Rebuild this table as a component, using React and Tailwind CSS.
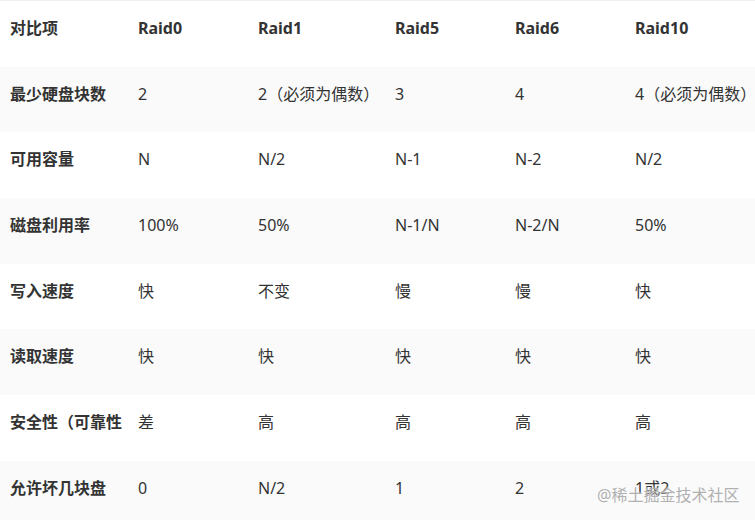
import React from "react";

const header = ["对比项", "Raid0", "Raid1", "Raid5", "Raid6", "Raid10"];
const rows = [
  ["最少硬盘块数", "2", "2（必须为偶数）", "3", "4", "4（必须为偶数）"],
  ["可用容量", "N", "N/2", "N-1", "N-2", "N/2"],
  ["磁盘利用率", "100%", "50%", "N-1/N", "N-2/N", "50%"],
  ["写入速度", "快", "不变", "慢", "慢", "快"],
  ["读取速度", "快", "快", "快", "快", "快"],
  ["安全性（可靠性", "差", "高", "高", "高", "高"],
  ["允许坏几块盘", "0", "N/2", "1", "2", "1或2"],
];

const font = { fontFamily: '"Noto Sans", "Noto Sans CJK SC", sans-serif' };

function Row({ cells, head, shaded }) {
  return (
    <div
      className={`grid grid-cols-[128px_120px_137px_120px_120px_1fr] h-[65.7px] ${
        shaded ? "bg-[#fafafa]" : "bg-white"
      }`}
    >
      {cells.map((c, i) => (
        <div
          key={i}
          className={`pl-[10px] pt-[15px] text-[16px] leading-6 whitespace-nowrap overflow-hidden text-[#333] ${
            head || i === 0 ? "font-bold" : "font-normal"
          }`}
        >
          {c}
        </div>
      ))}
    </div>
  );
}

export default function App() {
  return (
    <div className="relative w-[755px] h-[520px] overflow-hidden bg-white" style={font}>
      <div className="border-t border-[#f0f0f0]">
        <Row cells={header} head shaded={false} />
        {rows.map((r, i) => (
          <Row key={i} cells={r} shaded={i % 2 === 0} />
        ))}
      </div>
      <div className="absolute left-[597px] top-[483px] text-[16px] leading-6 text-[#b0b0b0] [text-shadow:0_0_2px_#fff]">
        @稀土掘金技术社区
      </div>
    </div>
  );
}
